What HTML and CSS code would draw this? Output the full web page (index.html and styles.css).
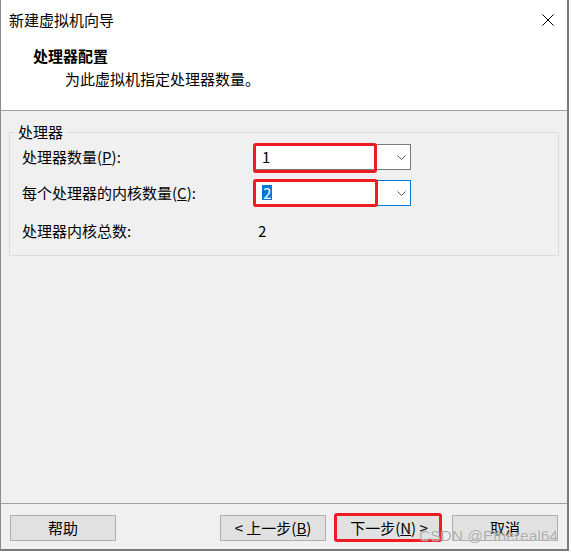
FILE: index.html
```html
<!DOCTYPE html>
<html lang="zh-CN">
<head>
<meta charset="utf-8">
<title>新建虚拟机向导</title>
<link rel="stylesheet" href="styles.css">
</head>
<body>
<div class="window">
  <header class="header">
    <div class="titlebar">
      <span class="title">新建虚拟机向导</span>
      <svg class="close" width="12" height="12" viewBox="0 0 12 12"><path d="M0.5 0.5L11.5 11.5M11.5 0.5L0.5 11.5" stroke="#000" stroke-width="1" fill="none"/></svg>
    </div>
    <div class="heading">处理器配置</div>
    <div class="subheading">为此虚拟机指定处理器数量。</div>
  </header>
  <main class="content">
    <fieldset class="group">
      <legend class="legend">处理器</legend>
      <div class="rows">
        <span class="lbl">处理器数量(<u>P</u>):</span>
        <div class="combo">
          <span class="val">1</span>
          <svg class="chev" width="9" height="5" viewBox="0 0 9 5"><path d="M0.5 0.5L4.5 4.5L8.5 0.5" stroke="#5a5a5a" stroke-width="1" fill="none"/></svg>
          <span class="mark mark-1"></span>
        </div>
        <span class="lbl">每个处理器的内核数量(<u>C</u>):</span>
        <div class="combo combo-focus">
          <span class="val"><span class="sel">2</span></span>
          <svg class="chev" width="9" height="5" viewBox="0 0 9 5"><path d="M0.5 0.5L4.5 4.5L8.5 0.5" stroke="#5a5a5a" stroke-width="1" fill="none"/></svg>
          <span class="mark mark-2"></span>
        </div>
        <span class="lbl lbl-total">处理器内核总数:</span>
        <span class="total">2</span>
      </div>
    </fieldset>
  </main>
  <footer class="footer">
    <button class="btn" type="button">帮助</button>
    <div class="spacer"></div>
    <button class="btn" type="button">&lt; 上一步(<u>B</u>)</button>
    <button class="btn btn-default" type="button">下一步(<u>N</u>) &gt;<span class="mark mark-3"></span></button>
    <button class="btn" type="button">取消</button>
  </footer>
  <span class="watermark">CSDN @Ethereal64</span>
</div>
</body>
</html>
```
FILE: styles.css
```css
* { box-sizing: border-box; }
html, body { margin: 0; padding: 0; background: #ffffff; }
body {
  font-family: "Noto Sans CJK SC", "Noto Sans", sans-serif;
  font-size: 15px;
  color: #000;
}
.window {
  position: relative;
  width: 569px;
  height: 551px;
  border-left: 1px solid #8c8c8c;
  border-right: 2px solid #7a7a7a;
  border-bottom: 2px solid #7a7a7a;
  display: flex;
  flex-direction: column;
  background: #f0f0f0;
}
.header {
  height: 111px;
  background: #fff;
  border-bottom: 1px solid #a0a0a0;
}
.titlebar {
  display: flex;
  align-items: center;
  justify-content: space-between;
  height: 20px;
  margin-top: 10px;
  padding-left: 8px;
  padding-right: 13px;
  line-height: 20px;
}
.close { display: block; }
.heading {
  margin-top: 16px;
  padding-left: 32px;
  line-height: 20px;
  font-weight: bold;
}
.subheading {
  margin-top: 3px;
  padding-left: 64px;
  line-height: 20px;
}
.content {
  flex: 1;
  background: #f0f0f0;
}
.group {
  margin: 12px 8px 0 8px;
  padding: 3px 0 13px 12px;
  border: 1px solid #dcdcdc;
  min-width: 0;
}
.legend {
  margin-left: -7px;
  padding: 0 3px;
  line-height: 18px;
}
.rows {
  display: grid;
  grid-template-columns: 232px 157px;
  grid-template-rows: 26px 26px 26px;
  row-gap: 10px;
}
.lbl {
  align-self: center;
  line-height: 20px;
}
.lbl-total, .total {
  align-self: start;
  padding-top: 5px;
  line-height: 20px;
}
.total { padding-left: 4px; }
.combo {
  position: relative;
  display: flex;
  align-items: center;
  height: 26px;
  border: 1px solid #7a7a7a;
  background: #fff;
}
.combo-focus { border-color: #0078d7; }
.val {
  padding-left: 7px;
  line-height: 20px;
}
.sel {
  display: inline-block;
  background: #0078d7;
  color: #fff;
  line-height: 15px;
  padding: 0 1px;
}
.chev {
  margin-left: auto;
  margin-right: 4px;
  display: block;
}
.mark {
  position: absolute;
  border: 3px solid #ee1d23;
  border-radius: 3px;
  pointer-events: none;
}
.mark-1 { left: -2px; top: -2px; width: 124px; height: 30px; }
.mark-2 { left: -2px; top: -2px; width: 125px; height: 28px; }
.mark-3 { left: -3px; top: -3px; width: 108px; height: 29px; }
.footer {
  display: flex;
  align-items: flex-start;
  gap: 10px;
  height: 46px;
  padding: 11px 9px 0 9px;
  border-top: 1px solid #a0a0a0;
  background: #f0f0f0;
}
.spacer { flex: 1; }
.btn {
  position: relative;
  width: 106px;
  height: 26px;
  padding: 0;
  border: 1px solid #adadad;
  background: #e1e1e1;
  font-family: inherit;
  font-size: 15px;
  line-height: 20px;
  color: #000;
}
.btn-default { border-color: #0078d7; }
.watermark {
  position: absolute;
  left: 418px;
  top: 527px;
  font-family: "Liberation Sans", Arial, sans-serif;
  font-size: 15.5px;
  line-height: 18px;
  color: rgba(150, 150, 150, 0.8);
  text-shadow: 0 0 1px #fff;
  white-space: nowrap;
}
```
